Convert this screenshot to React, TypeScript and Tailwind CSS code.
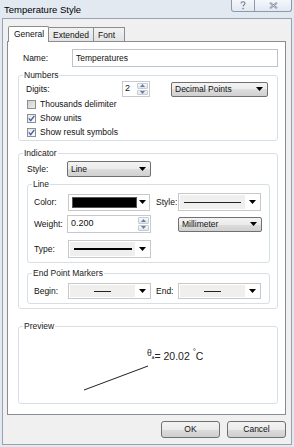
import React from "react";

const Arrow = () => (
  <svg width="7" height="4" viewBox="0 0 7 4" className="shrink-0">
    <path d="M0 0H7L3.5 4Z" fill="#000" />
  </svg>
);

function DropButton({ text, className }: { text: string; className: string }) {
  return (
    <div
      className={`flex items-center justify-between pl-[3px] pr-[4px] border border-[#707070] rounded-[2px] bg-[linear-gradient(#f3f3f3,#ebebeb_50%,#dddddd_50%,#d0d0d0)] ${className}`}
    >
      <span className="leading-[10px]">{text}</span>
      <Arrow />
    </div>
  );
}

function SpinButtons() {
  return (
    <div className="flex flex-col w-[11px] h-full gap-[1px] py-[1px] mr-[1px]">
      <div className="flex-1 border border-[#c5ccd6] rounded-[1px] bg-[linear-gradient(#f6f8fa,#e1e6ec)] flex items-center justify-center">
        <svg width="5" height="3" viewBox="0 0 5 3">
          <path d="M0 3H5L2.5 0Z" fill="#6b7f9e" />
        </svg>
      </div>
      <div className="flex-1 border border-[#c5ccd6] rounded-[1px] bg-[linear-gradient(#f6f8fa,#e1e6ec)] flex items-center justify-center">
        <svg width="5" height="3" viewBox="0 0 5 3">
          <path d="M0 0H5L2.5 3Z" fill="#6b7f9e" />
        </svg>
      </div>
    </div>
  );
}

function Check({ checked, label }: { checked: boolean; label: string }) {
  return (
    <div className="h-[14px] flex items-center">
      <div
        className={`ml-[1px] w-[9px] h-[9px] border border-[#8e8f8f] flex items-center justify-center ${
          checked ? "bg-[linear-gradient(135deg,#e6e6e6,#fbfbfb)]" : "bg-[linear-gradient(135deg,#cfcfcf,#ececec)]"
        }`}
      >
        {checked && (
          <svg width="7" height="7" viewBox="0 0 7 7">
            <path d="M0.8 3.4L2.7 5.6L6.3 0.8" stroke="#3d5ea3" strokeWidth="1.3" fill="none" />
          </svg>
        )}
      </div>
      <span className="ml-[4px] leading-[10px]">{label}</span>
    </div>
  );
}

function OwnerCombo({ className, children }: { className: string; children: React.ReactNode }) {
  return (
    <div className={`flex items-stretch border border-[#c8c8c8] bg-white p-[1px] ${className}`}>
      <div className="flex-1 bg-[#efefef] flex items-center justify-center">{children}</div>
      <div className="w-[14px] flex items-center justify-center">
        <Arrow />
      </div>
    </div>
  );
}

function Group({
  title,
  className,
  children,
}: {
  title: string;
  className: string;
  children: React.ReactNode;
}) {
  return (
    <fieldset className={`border border-[#d5dfe5] rounded-[3px] ${className}`}>
      <legend className="ml-[4px] px-[1px] leading-[10px] text-[#1a1a1a]">{title}</legend>
      {children}
    </fieldset>
  );
}

export default function App() {
  return (
    <div className="w-[294px] h-[447px] bg-[#e3e9f1] flex flex-col font-['Liberation_Sans',Arial,sans-serif] text-[8.5px] text-[#111] overflow-hidden">
      {/* title bar */}
      <div className="h-[18px] shrink-0 flex items-start justify-between pl-[4px] pr-[2px]">
        <span className="text-[9.5px] mt-[4px] leading-[11px] text-black">Temperature Style</span>
        <div className="flex">
          <div className="w-[24px] h-[12px] border border-t-0 border-[#8c9ab0] rounded-bl-[3px] bg-[linear-gradient(#f4f7fb,#e3e9f1)] flex items-center justify-center">
            <svg width="6" height="9" viewBox="0 0 6 9">
              <path d="M1 2.6C1 1.3 2 .8 3 .8S5 1.4 5 2.5 3.3 3.8 3.1 5.4" stroke="#6f7b8b" strokeWidth="1.1" fill="none" />
              <circle cx="3.1" cy="7.6" r="0.8" fill="#6f7b8b" />
            </svg>
          </div>
          <div className="w-[37px] h-[12px] border border-t-0 border-l-0 border-[#8c9ab0] rounded-br-[3px] bg-[linear-gradient(#f4f7fb,#e3e9f1)] flex items-center justify-center">
            <svg width="9" height="7" viewBox="0 0 9 7">
              <path d="M1 0.8L8 6.2M8 0.8L1 6.2" stroke="#7d8898" strokeWidth="2" />
              <path d="M1 0.8L8 6.2M8 0.8L1 6.2" stroke="#eef1f5" strokeWidth="0.6" />
            </svg>
          </div>
        </div>
      </div>

      {/* client area */}
      <div className="flex-1 mx-[2px] mb-[2px] border border-[#97a3b2] bg-[#f0f0f0] flex flex-col pt-[7px] pl-[4px] pr-[5px]">
        {/* tabs */}
        <div className="flex items-end h-[15px] pl-[1px] relative z-10">
          <div className="w-[41px] h-[16px] -mb-[1px] border border-b-0 border-[#898c95] bg-white rounded-t-[2px] pl-[5px] pt-[2px] leading-[10px]">
            General
          </div>
          <div className="w-[45px] h-[14px] border border-b-0 border-l-0 border-[#898c95] bg-[linear-gradient(#f2f2f2,#e3e3e3)] pl-[4px] pt-[2px] leading-[10px]">
            Extended
          </div>
          <div className="w-[31px] h-[14px] border border-b-0 border-l-0 border-[#898c95] bg-[linear-gradient(#f2f2f2,#e3e3e3)] pl-[4px] pt-[2px] leading-[10px]">
            Font
          </div>
        </div>

        {/* panel */}
        <div className="h-[374px] border border-[#898c95] bg-white flex flex-col pl-[10px] pr-[7px]">
          {/* name */}
          <div className="flex items-center mt-[7px] h-[18px]">
            <span className="w-[54px] pl-[5px]">Name:</span>
            <div className="flex-1 h-[18px] border border-[#bfc3c9] flex items-center pl-[3px]">Temperatures</div>
          </div>

          {/* Numbers */}
          <Group title="Numbers" className="mt-[3px]">
            <div className="pl-[7px] pr-[8px] pb-[1px]">
              <div className="flex items-center h-[16px] mt-[1px]">
                <span className="w-[96px]">Digits:</span>
                <div className="w-[28px] h-[16px] border border-[#c6cad0] flex items-stretch">
                  <span className="flex-1 pl-[2px] flex items-center text-[9px]">2</span>
                  <SpinButtons />
                </div>
                <DropButton text="Decimal Points" className="ml-[21px] w-[97px] h-[15px]" />
              </div>
              <Check checked={false} label="Thousands delimiter" />
              <Check checked={true} label="Show units" />
              <Check checked={true} label="Show result symbols" />
            </div>
          </Group>

          {/* Indicator */}
          <Group title="Indicator" className="mt-[7px]">
            <div className="pl-[8px] pr-[7px] pb-[4px]">
              <div className="flex items-center h-[16px] mt-[3px]">
                <span className="w-[40px]">Style:</span>
                <DropButton text="Line" className="w-[84px] h-[16px]" />
              </div>

              <Group title="Line" className="mt-[2px]">
                <div className="pl-[6px] pr-[7px] pb-[4px]">
                  <div className="flex items-center h-[18px] mt-[4px]">
                    <span className="w-[34px]">Color:</span>
                    <div className="w-[82px] h-[17px] border border-[#c8c8c8] bg-white flex items-stretch p-[1px]">
                      <div className="flex-1 flex items-center pl-[2px]">
                        <div className="w-[65px] h-[11px] bg-black border border-[#555]" />
                      </div>
                      <div className="w-[12px] flex items-center justify-center">
                        <Arrow />
                      </div>
                    </div>
                    <span className="ml-[6px] w-[22px]">Style:</span>
                    <OwnerCombo className="w-[83px] h-[18px]">
                      <div className="w-[57px] h-[1px] bg-[#222]" />
                    </OwnerCombo>
                  </div>

                  <div className="flex items-center h-[18px] mt-[4px]">
                    <span className="w-[33px]">Weight:</span>
                    <div className="w-[84px] h-[18px] border border-[#c6cad0] flex items-stretch">
                      <span className="flex-1 pl-[3px] flex items-center text-[9px]">0.200</span>
                      <SpinButtons />
                    </div>
                    <DropButton text="Millimeter" className="ml-[27px] w-[84px] h-[15px]" />
                  </div>

                  <div className="flex items-center h-[18px] mt-[7px]">
                    <span className="w-[34px]">Type:</span>
                    <OwnerCombo className="w-[83px] h-[18px]">
                      <div className="w-[58px] h-[2px] bg-black" />
                    </OwnerCombo>
                  </div>
                </div>
              </Group>

              <Group title="End Point Markers" className="mt-[5px]">
                <div className="pl-[6px] pr-[7px] pb-[4px]">
                  <div className="flex items-center h-[16px] mt-[5px]">
                    <span className="w-[34px]">Begin:</span>
                    <OwnerCombo className="w-[83px] h-[16px]">
                      <div className="w-[17px] h-[1px] bg-[#222]" />
                    </OwnerCombo>
                    <span className="ml-[5px] w-[22px]">End:</span>
                    <OwnerCombo className="w-[83px] h-[16px]">
                      <div className="w-[17px] h-[1px] bg-[#222]" />
                    </OwnerCombo>
                  </div>
                </div>
              </Group>
            </div>
          </Group>

          {/* Preview */}
          <Group title="Preview" className="mt-[12px]">
            <div className="relative h-[72px]">
              <svg className="absolute inset-0" width="258" height="72" viewBox="0 0 258 72">
                <path d="M65 59L129 35" stroke="#222" strokeWidth="1" />
              </svg>
              <div className="absolute left-[128px] top-[17px] flex items-start text-[#222] leading-none">
                <span className="text-[8.5px] mt-[1px]">θ</span>
                <span className="text-[4px] mt-[8px]">A</span>
                <span className="text-[10.5px] mt-[3px]">= 20.02&nbsp;</span>
                <span className="text-[8px] mt-[0px]">°</span>
                <span className="text-[10.5px] mt-[3px]">C</span>
              </div>
            </div>
          </Group>
        </div>

        {/* buttons */}
        <div className="flex justify-end gap-[7px] mt-[6px]">
          <div className="w-[59px] h-[17px] border border-[#707070] rounded-[3px] bg-[linear-gradient(#f3f3f3,#ebebeb_50%,#dddddd_50%,#cfcfcf)] flex items-center justify-center">
            OK
          </div>
          <div className="w-[59px] h-[17px] border border-[#707070] rounded-[3px] bg-[linear-gradient(#f3f3f3,#ebebeb_50%,#dddddd_50%,#cfcfcf)] flex items-center justify-center">
            Cancel
          </div>
        </div>
      </div>
    </div>
  );
}
